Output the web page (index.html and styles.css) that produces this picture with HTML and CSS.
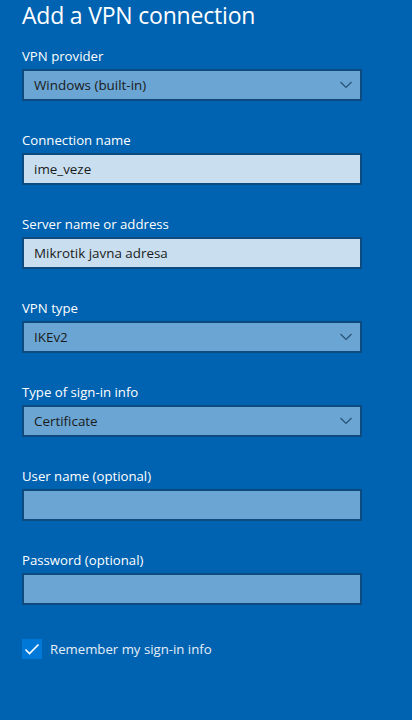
FILE: index.html
```html
<!DOCTYPE html>
<html>
<head>
<meta charset="utf-8">
<link rel="stylesheet" href="styles.css">
</head>
<body>
<div class="page">
  <h1 class="title">Add a VPN connection</h1>
  <div class="form">
    <div class="field">
      <div class="label">VPN provider</div>
      <div class="box select"><span>Windows (built-in)</span><svg class="chev" width="12" height="8" viewBox="0 0 12 8"><path d="M0.5 1 L6 6.5 L11.5 1" fill="none" stroke="#2a5275" stroke-width="1.2"/></svg></div>
    </div>
    <div class="field">
      <div class="label">Connection name</div>
      <div class="box input"><span>ime_veze</span></div>
    </div>
    <div class="field">
      <div class="label">Server name or address</div>
      <div class="box input"><span>Mikrotik javna adresa</span></div>
    </div>
    <div class="field">
      <div class="label">VPN type</div>
      <div class="box select"><span>IKEv2</span><svg class="chev" width="12" height="8" viewBox="0 0 12 8"><path d="M0.5 1 L6 6.5 L11.5 1" fill="none" stroke="#2a5275" stroke-width="1.2"/></svg></div>
    </div>
    <div class="field">
      <div class="label">Type of sign-in info</div>
      <div class="box select"><span>Certificate</span><svg class="chev" width="12" height="8" viewBox="0 0 12 8"><path d="M0.5 1 L6 6.5 L11.5 1" fill="none" stroke="#2a5275" stroke-width="1.2"/></svg></div>
    </div>
    <div class="field">
      <div class="label">User name (optional)</div>
      <div class="box empty"></div>
    </div>
    <div class="field">
      <div class="label">Password (optional)</div>
      <div class="box empty"></div>
    </div>
    <div class="check-row">
      <div class="checkbox"><svg width="20" height="20" viewBox="0 0 20 20"><path d="M3.5 10.5 L7.5 14.5 L16.5 5.5" fill="none" stroke="#ffffff" stroke-width="1.6"/></svg></div>
      <span class="check-label">Remember my sign-in info</span>
    </div>
  </div>
</div>
</body>
</html>
```
FILE: styles.css
```css
html, body {
  margin: 0;
  padding: 0;
  background: #0063b1;
}
body {
  font-family: "Open Sans", "Noto Sans", sans-serif;
  color: #ffffff;
  width: 412px;
  height: 720px;
  overflow: hidden;
}
.page {
  padding: 0 0 0 22px;
}
.title {
  margin: -1px 0 0 0;
  font-weight: 400;
  font-size: 23px;
  line-height: 32px;
  letter-spacing: -0.2px;
  color: #ffffff;
}
.form {
  margin-top: 16px;
  display: flex;
  flex-direction: column;
  gap: 30px;
}
.field {
  display: flex;
  flex-direction: column;
  gap: 4px;
}
.label {
  font-size: 13.2px;
  line-height: 18px;
  height: 18px;
  color: #ffffff;
}
.box {
  box-sizing: border-box;
  width: 340px;
  height: 32px;
  border: 2px solid #0d4a7d;
  display: flex;
  align-items: center;
  padding: 0 10px;
  font-size: 13.4px;
  color: #1b1b1b;
}
.select {
  background: #6aa5d3;
  justify-content: space-between;
}
.select .chev {
  margin-right: -2px;
}
.input {
  background: #c9dfef;
}
.empty {
  background: #6aa5d3;
}
.check-row {
  display: flex;
  align-items: center;
  gap: 8px;
  margin-top: 4px;
}
.checkbox {
  width: 20px;
  height: 20px;
  background: #0078d7;
  display: flex;
}
.check-label {
  font-size: 13.2px;
  color: #e6eef7;
}
```
